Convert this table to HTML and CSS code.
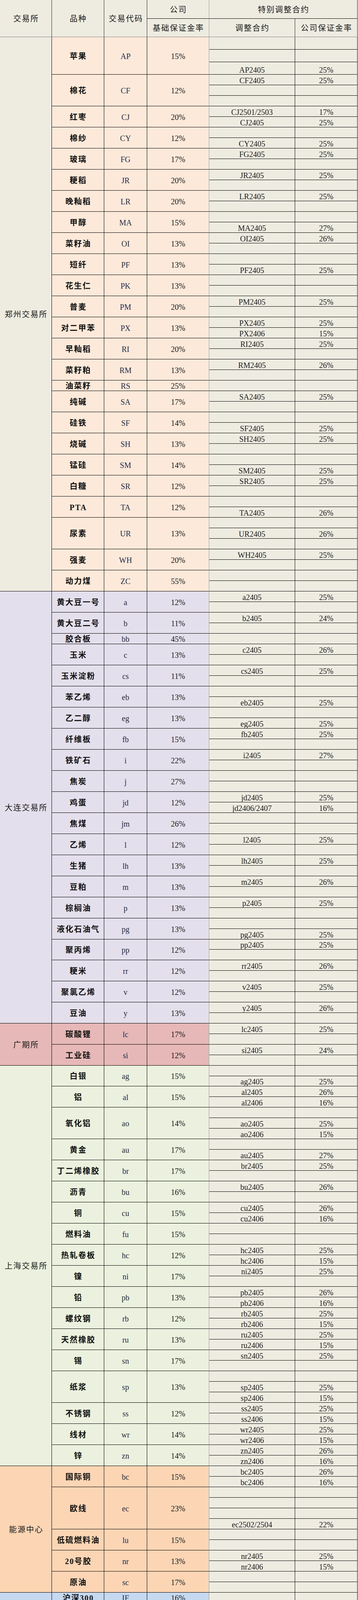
FILE: index.html
```html
<!DOCTYPE html>
<html lang="zh-CN">
<head>
<meta charset="utf-8">
<title>保证金率</title>
<link rel="stylesheet" href="styles.css">
</head>
<body>
<div class="sheet">
  <div class="head">
    <div class="h h-ex">交易所</div>
    <div class="h h-nm">品种</div>
    <div class="h h-cd">交易代码</div>
    <div class="h h-co">公司</div>
    <div class="h h-sp">特别调整合约</div>
    <div class="h h-base">基础保证金率</div>
    <div class="h h-adj">调整合约</div>
    <div class="h h-rate">公司保证金率</div>
  </div>

  <section class="ex zz">
    <div class="lab">郑州交易所</div>
    <div class="prods">
      <div class="p"><div class="n">苹果</div><div class="c">AP</div><div class="r">15%</div><div class="adj"><div class="s t"><span></span><span></span></div><div class="s t"><span></span><span></span></div><div class="s t"><span>AP2405</span><span>25%</span></div></div></div>
      <div class="p"><div class="n">棉花</div><div class="c">CF</div><div class="r">12%</div><div class="adj"><div class="s"><span>CF2405</span><span>25%</span></div><div class="s"><span></span><span></span></div><div class="s"><span></span><span></span></div></div></div>
      <div class="p"><div class="n">红枣</div><div class="c">CJ</div><div class="r">20%</div><div class="adj"><div class="s"><span>CJ2501/2503</span><span>17%</span></div><div class="s"><span>CJ2405</span><span>25%</span></div></div></div>
      <div class="p"><div class="n">棉纱</div><div class="c">CY</div><div class="r">12%</div><div class="adj"><div class="s"><span></span><span></span></div><div class="s"><span>CY2405</span><span>25%</span></div></div></div>
      <div class="p"><div class="n">玻璃</div><div class="c">FG</div><div class="r">17%</div><div class="adj"><div class="s"><span>FG2405</span><span>25%</span></div><div class="s"><span></span><span></span></div></div></div>
      <div class="p"><div class="n">粳稻</div><div class="c">JR</div><div class="r">20%</div><div class="adj"><div class="s"><span>JR2405</span><span>25%</span></div><div class="s"><span></span><span></span></div></div></div>
      <div class="p"><div class="n">晚籼稻</div><div class="c">LR</div><div class="r">20%</div><div class="adj"><div class="s"><span>LR2405</span><span>25%</span></div><div class="s"><span></span><span></span></div></div></div>
      <div class="p"><div class="n">甲醇</div><div class="c">MA</div><div class="r">15%</div><div class="adj"><div class="s"><span></span><span></span></div><div class="s"><span>MA2405</span><span>27%</span></div></div></div>
      <div class="p"><div class="n">菜籽油</div><div class="c">OI</div><div class="r">13%</div><div class="adj"><div class="s"><span>OI2405</span><span>26%</span></div><div class="s"><span></span><span></span></div></div></div>
      <div class="p"><div class="n">短纤</div><div class="c">PF</div><div class="r">13%</div><div class="adj"><div class="s"><span></span><span></span></div><div class="s"><span>PF2405</span><span>25%</span></div></div></div>
      <div class="p"><div class="n">花生仁</div><div class="c">PK</div><div class="r">13%</div><div class="adj"><div class="s"><span></span><span></span></div><div class="s"><span></span><span></span></div></div></div>
      <div class="p"><div class="n">普麦</div><div class="c">PM</div><div class="r">20%</div><div class="adj"><div class="s"><span>PM2405</span><span>25%</span></div><div class="s"><span></span><span></span></div></div></div>
      <div class="p"><div class="n">对二甲苯</div><div class="c">PX</div><div class="r">13%</div><div class="adj"><div class="s"><span>PX2405</span><span>25%</span></div><div class="s"><span>PX2406</span><span>15%</span></div></div></div>
      <div class="p"><div class="n">早籼稻</div><div class="c">RI</div><div class="r">20%</div><div class="adj"><div class="s"><span>RI2405</span><span>25%</span></div><div class="s"><span></span><span></span></div></div></div>
      <div class="p"><div class="n">菜籽粕</div><div class="c">RM</div><div class="r">13%</div><div class="adj"><div class="s"><span>RM2405</span><span>26%</span></div><div class="s"><span></span><span></span></div></div></div>
      <div class="p"><div class="n">油菜籽</div><div class="c">RS</div><div class="r">25%</div><div class="adj"><div class="s"><span></span><span></span></div></div></div>
      <div class="p"><div class="n">纯碱</div><div class="c">SA</div><div class="r">17%</div><div class="adj"><div class="s"><span>SA2405</span><span>25%</span></div><div class="s"><span></span><span></span></div></div></div>
      <div class="p"><div class="n">硅铁</div><div class="c">SF</div><div class="r">14%</div><div class="adj"><div class="s"><span></span><span></span></div><div class="s"><span>SF2405</span><span>25%</span></div></div></div>
      <div class="p"><div class="n">烧碱</div><div class="c">SH</div><div class="r">13%</div><div class="adj"><div class="s"><span>SH2405</span><span>25%</span></div><div class="s"><span></span><span></span></div></div></div>
      <div class="p"><div class="n">锰硅</div><div class="c">SM</div><div class="r">14%</div><div class="adj"><div class="s"><span></span><span></span></div><div class="s"><span>SM2405</span><span>25%</span></div></div></div>
      <div class="p"><div class="n">白糖</div><div class="c">SR</div><div class="r">12%</div><div class="adj"><div class="s"><span>SR2405</span><span>25%</span></div><div class="s"><span></span><span></span></div></div></div>
      <div class="p"><div class="n">PTA</div><div class="c">TA</div><div class="r">12%</div><div class="adj"><div class="s"><span></span><span></span></div><div class="s"><span>TA2405</span><span>26%</span></div></div></div>
      <div class="p"><div class="n">尿素</div><div class="c">UR</div><div class="r">13%</div><div class="adj"><div class="s"><span></span><span></span></div><div class="s"><span>UR2405</span><span>26%</span></div><div class="s"><span></span><span></span></div></div></div>
      <div class="p"><div class="n">强麦</div><div class="c">WH</div><div class="r">20%</div><div class="adj"><div class="s"><span>WH2405</span><span>25%</span></div><div class="s"><span></span><span></span></div></div></div>
      <div class="p"><div class="n">动力煤</div><div class="c">ZC</div><div class="r">55%</div><div class="adj"><div class="s"><span></span><span></span></div><div class="s"><span></span><span></span></div></div></div>
    </div>
  </section>

  <section class="ex dl">
    <div class="lab">大连交易所</div>
    <div class="prods">
      <div class="p"><div class="n">黄大豆一号</div><div class="c">a</div><div class="r">12%</div><div class="adj"><div class="s"><span>a2405</span><span>25%</span></div><div class="s"><span></span><span></span></div></div></div>
      <div class="p"><div class="n">黄大豆二号</div><div class="c">b</div><div class="r">11%</div><div class="adj"><div class="s"><span>b2405</span><span>24%</span></div><div class="s"><span></span><span></span></div></div></div>
      <div class="p"><div class="n">胶合板</div><div class="c">bb</div><div class="r">45%</div><div class="adj"><div class="s"><span></span><span></span></div></div></div>
      <div class="p"><div class="n">玉米</div><div class="c">c</div><div class="r">13%</div><div class="adj"><div class="s"><span>c2405</span><span>26%</span></div><div class="s"><span></span><span></span></div></div></div>
      <div class="p"><div class="n">玉米淀粉</div><div class="c">cs</div><div class="r">11%</div><div class="adj"><div class="s"><span>cs2405</span><span>25%</span></div><div class="s"><span></span><span></span></div></div></div>
      <div class="p"><div class="n">苯乙烯</div><div class="c">eb</div><div class="r">13%</div><div class="adj"><div class="s"><span></span><span></span></div><div class="s"><span>eb2405</span><span>25%</span></div></div></div>
      <div class="p"><div class="n">乙二醇</div><div class="c">eg</div><div class="r">13%</div><div class="adj"><div class="s"><span></span><span></span></div><div class="s"><span>eg2405</span><span>25%</span></div></div></div>
      <div class="p"><div class="n">纤维板</div><div class="c">fb</div><div class="r">15%</div><div class="adj"><div class="s"><span>fb2405</span><span>25%</span></div><div class="s"><span></span><span></span></div></div></div>
      <div class="p"><div class="n">铁矿石</div><div class="c">i</div><div class="r">22%</div><div class="adj"><div class="s"><span>i2405</span><span>27%</span></div><div class="s"><span></span><span></span></div></div></div>
      <div class="p"><div class="n">焦炭</div><div class="c">j</div><div class="r">27%</div><div class="adj"><div class="s"><span></span><span></span></div><div class="s"><span></span><span></span></div></div></div>
      <div class="p"><div class="n">鸡蛋</div><div class="c">jd</div><div class="r">12%</div><div class="adj"><div class="s"><span>jd2405</span><span>25%</span></div><div class="s"><span>jd2406/2407</span><span>16%</span></div></div></div>
      <div class="p"><div class="n">焦煤</div><div class="c">jm</div><div class="r">26%</div><div class="adj"><div class="s"><span></span><span></span></div><div class="s"><span></span><span></span></div></div></div>
      <div class="p"><div class="n">乙烯</div><div class="c">l</div><div class="r">12%</div><div class="adj"><div class="s"><span>l2405</span><span>25%</span></div><div class="s"><span></span><span></span></div></div></div>
      <div class="p"><div class="n">生猪</div><div class="c">lh</div><div class="r">13%</div><div class="adj"><div class="s"><span>lh2405</span><span>25%</span></div><div class="s"><span></span><span></span></div></div></div>
      <div class="p"><div class="n">豆粕</div><div class="c">m</div><div class="r">13%</div><div class="adj"><div class="s"><span>m2405</span><span>26%</span></div><div class="s"><span></span><span></span></div></div></div>
      <div class="p"><div class="n">棕榈油</div><div class="c">p</div><div class="r">13%</div><div class="adj"><div class="s"><span>p2405</span><span>25%</span></div><div class="s"><span></span><span></span></div></div></div>
      <div class="p"><div class="n">液化石油气</div><div class="c">pg</div><div class="r">13%</div><div class="adj"><div class="s"><span></span><span></span></div><div class="s"><span>pg2405</span><span>25%</span></div></div></div>
      <div class="p"><div class="n">聚丙烯</div><div class="c">pp</div><div class="r">12%</div><div class="adj"><div class="s x"><span>pp2405</span><span>25%</span></div><div class="s"><span></span><span></span></div></div></div>
      <div class="p"><div class="n">粳米</div><div class="c">rr</div><div class="r">12%</div><div class="adj"><div class="s"><span>rr2405</span><span>26%</span></div><div class="s"><span></span><span></span></div></div></div>
      <div class="p"><div class="n">聚氯乙烯</div><div class="c">v</div><div class="r">12%</div><div class="adj"><div class="s"><span>v2405</span><span>25%</span></div><div class="s"><span></span><span></span></div></div></div>
      <div class="p"><div class="n">豆油</div><div class="c">y</div><div class="r">13%</div><div class="adj"><div class="s"><span>y2405</span><span>26%</span></div><div class="s"><span></span><span></span></div></div></div>
    </div>
  </section>

  <section class="ex gz">
    <div class="lab">广期所</div>
    <div class="prods">
      <div class="p"><div class="n">碳酸锂</div><div class="c">lc</div><div class="r">17%</div><div class="adj"><div class="s"><span>lc2405</span><span>25%</span></div><div class="s"><span></span><span></span></div></div></div>
      <div class="p"><div class="n">工业硅</div><div class="c">si</div><div class="r">12%</div><div class="adj"><div class="s"><span>si2405</span><span>24%</span></div><div class="s"><span></span><span></span></div></div></div>
    </div>
  </section>

  <section class="ex shx">
    <div class="lab">上海交易所</div>
    <div class="prods">
      <div class="p"><div class="n">白银</div><div class="c">ag</div><div class="r">15%</div><div class="adj"><div class="s"><span></span><span></span></div><div class="s x"><span>ag2405</span><span>25%</span></div></div></div>
      <div class="p"><div class="n">铝</div><div class="c">al</div><div class="r">15%</div><div class="adj"><div class="s"><span>al2405</span><span>26%</span></div><div class="s"><span>al2406</span><span>16%</span></div></div></div>
      <div class="p"><div class="n">氧化铝</div><div class="c">ao</div><div class="r">14%</div><div class="adj"><div class="s"><span></span><span></span></div><div class="s"><span>ao2405</span><span>25%</span></div><div class="s"><span>ao2406</span><span>15%</span></div></div></div>
      <div class="p"><div class="n">黄金</div><div class="c">au</div><div class="r">17%</div><div class="adj"><div class="s"><span></span><span></span></div><div class="s"><span>au2405</span><span>27%</span></div></div></div>
      <div class="p"><div class="n">丁二烯橡胶</div><div class="c">br</div><div class="r">17%</div><div class="adj"><div class="s"><span>br2405</span><span>25%</span></div><div class="s"><span></span><span></span></div></div></div>
      <div class="p"><div class="n">沥青</div><div class="c">bu</div><div class="r">16%</div><div class="adj"><div class="s"><span>bu2405</span><span>26%</span></div><div class="s"><span></span><span></span></div></div></div>
      <div class="p"><div class="n">铜</div><div class="c">cu</div><div class="r">15%</div><div class="adj"><div class="s"><span>cu2405</span><span>26%</span></div><div class="s"><span>cu2406</span><span>16%</span></div></div></div>
      <div class="p"><div class="n">燃料油</div><div class="c">fu</div><div class="r">15%</div><div class="adj"><div class="s"><span></span><span></span></div><div class="s"><span></span><span></span></div></div></div>
      <div class="p"><div class="n">热轧卷板</div><div class="c">hc</div><div class="r">12%</div><div class="adj"><div class="s"><span>hc2405</span><span>25%</span></div><div class="s"><span>hc2406</span><span>15%</span></div></div></div>
      <div class="p"><div class="n">镍</div><div class="c">ni</div><div class="r">17%</div><div class="adj"><div class="s"><span>ni2405</span><span>25%</span></div><div class="s"><span></span><span></span></div></div></div>
      <div class="p"><div class="n">铅</div><div class="c">pb</div><div class="r">13%</div><div class="adj"><div class="s"><span>pb2405</span><span>26%</span></div><div class="s"><span>pb2406</span><span>16%</span></div></div></div>
      <div class="p"><div class="n">螺纹钢</div><div class="c">rb</div><div class="r">12%</div><div class="adj"><div class="s"><span>rb2405</span><span>25%</span></div><div class="s"><span>rb2406</span><span>15%</span></div></div></div>
      <div class="p"><div class="n">天然橡胶</div><div class="c">ru</div><div class="r">13%</div><div class="adj"><div class="s"><span>ru2405</span><span>25%</span></div><div class="s"><span>ru2406</span><span>15%</span></div></div></div>
      <div class="p"><div class="n">锡</div><div class="c">sn</div><div class="r">17%</div><div class="adj"><div class="s"><span>sn2405</span><span>25%</span></div><div class="s"><span></span><span></span></div></div></div>
      <div class="p"><div class="n">纸浆</div><div class="c">sp</div><div class="r">13%</div><div class="adj"><div class="s"><span></span><span></span></div><div class="s"><span>sp2405</span><span>25%</span></div><div class="s"><span>sp2406</span><span>15%</span></div></div></div>
      <div class="p"><div class="n">不锈钢</div><div class="c">ss</div><div class="r">12%</div><div class="adj"><div class="s"><span>ss2405</span><span>25%</span></div><div class="s"><span>ss2406</span><span>15%</span></div></div></div>
      <div class="p"><div class="n">线材</div><div class="c">wr</div><div class="r">14%</div><div class="adj"><div class="s"><span>wr2405</span><span>25%</span></div><div class="s"><span>wr2406</span><span>15%</span></div></div></div>
      <div class="p"><div class="n">锌</div><div class="c">zn</div><div class="r">14%</div><div class="adj"><div class="s"><span>zn2405</span><span>26%</span></div><div class="s"><span>zn2406</span><span>16%</span></div></div></div>
    </div>
  </section>

  <section class="ex ne">
    <div class="lab">能源中心</div>
    <div class="prods">
      <div class="p"><div class="n">国际铜</div><div class="c">bc</div><div class="r">15%</div><div class="adj"><div class="s"><span>bc2405</span><span>26%</span></div><div class="s"><span>bc2406</span><span>16%</span></div></div></div>
      <div class="p"><div class="n">欧线</div><div class="c">ec</div><div class="r">23%</div><div class="adj"><div class="s"><span></span><span></span></div><div class="s"><span></span><span></span></div><div class="s"><span></span><span></span></div><div class="s"><span>ec2502/2504</span><span>22%</span></div></div></div>
      <div class="p"><div class="n">低硫燃料油</div><div class="c">lu</div><div class="r">15%</div><div class="adj"><div class="s"><span></span><span></span></div><div class="s"><span></span><span></span></div></div></div>
      <div class="p"><div class="n">20号胶</div><div class="c">nr</div><div class="r">13%</div><div class="adj"><div class="s"><span>nr2405</span><span>25%</span></div><div class="s"><span>nr2406</span><span>15%</span></div></div></div>
      <div class="p"><div class="n">原油</div><div class="c">sc</div><div class="r">17%</div><div class="adj"><div class="s"><span></span><span></span></div><div class="s"><span></span><span></span></div></div></div>
    </div>
  </section>

  <section class="ex cf">
    <div class="lab">中金所</div>
    <div class="prods">
      <div class="p"><div class="n">沪深300</div><div class="c">IF</div><div class="r">16%</div><div class="adj"><div class="s"><span></span><span></span></div></div></div>
      <div class="p"><div class="n">中证1000</div><div class="c">IM</div><div class="r">16%</div><div class="adj"><div class="s"><span></span><span></span></div></div></div>
      <div class="p"><div class="n">中证500</div><div class="c">IC</div><div class="r">16%</div><div class="adj"><div class="s"><span></span><span></span></div></div></div>
      <div class="p"><div class="n">上证50</div><div class="c">IH</div><div class="r">16%</div><div class="adj"><div class="s"><span></span><span></span></div></div></div>
      <div class="p"><div class="n">2年期国债</div><div class="c">TS</div><div class="r">1%</div><div class="adj"><div class="s"><span>TS2403</span><span>1.5%</span></div></div></div>
      <div class="p"><div class="n">5年期国债</div><div class="c">TF</div><div class="r">3.2%</div><div class="adj"><div class="s"><span>TF2403</span><span>4%</span></div></div></div>
      <div class="p"><div class="n">10年期国债</div><div class="c">T</div><div class="r">4%</div><div class="adj"><div class="s"><span>T2403</span><span>5%</span></div></div></div>
      <div class="p"><div class="n">30年期国债</div><div class="c">TL</div><div class="r">5%</div><div class="adj"><div class="s"><span>TL2403</span><span>6.5%</span></div></div></div>
    </div>
  </section>

  <div class="blank">
    <div class="row"><div></div><div></div><div></div><div></div><div></div><div></div></div>
    <div class="row"><div></div><div></div><div></div><div></div><div></div><div></div></div>
    <div class="row"><div></div><div></div><div></div><div></div><div></div><div></div></div>
    <div class="row"><div></div><div></div><div></div><div></div><div></div><div></div></div>
    <div class="row"><div></div><div></div><div></div><div></div><div></div><div></div></div>
    <div class="row"><div></div><div></div><div></div><div></div><div></div><div></div></div>
  </div>
</div>
</body>
</html>
```

FILE: styles.css
```css
* { box-sizing: border-box; }

body {
  margin: 0;
  background: #ffffff;
  font-family: "Liberation Serif", "Noto Sans CJK SC", serif;
  font-size: 20px;
  line-height: 20px;
  color: #222222;
}

.sheet {
  width: 916px;
}

/* ---------- header ---------- */
.head {
  display: grid;
  grid-template-columns: 133px 134px 110px 159px 220px 160px;
  grid-template-rows: 48px 46px;
  background: #eeece1;
  border-bottom: 1px solid #7f7f7f;
}

.h {
  display: flex;
  align-items: center;
  justify-content: center;
  font-family: "Noto Sans CJK SC", sans-serif;
  line-height: 24px;
  letter-spacing: 2px;
  padding-left: 2px;
  color: #1a1a1a;
  border-right: 1px solid #222;
  overflow: hidden;
}

.h-ex { grid-column: 1; grid-row: 1 / 3; }
.h-nm { grid-column: 2; grid-row: 1 / 3; }
.h-cd { grid-column: 3; grid-row: 1 / 3; }
.h-co { grid-column: 4; grid-row: 1; border-bottom: 1px solid #000; border-right-color: #9a9a9a; }
.h-sp { grid-column: 5 / 7; grid-row: 1; border-bottom: 1px solid #000; }
.h-base { grid-column: 4; grid-row: 2; border-right-color: #9a9a9a; }
.h-adj { grid-column: 5; grid-row: 2; }
.h-rate { grid-column: 6; grid-row: 2; }

/* ---------- exchange blocks ---------- */
.ex {
  display: flex;
}

.lab {
  width: 133px;
  flex: none;
  display: flex;
  align-items: center;
  justify-content: center;
  font-family: "Noto Sans CJK SC", sans-serif;
  line-height: 24px;
  letter-spacing: 2px;
  padding-left: 2px;
  color: #1a1a1a;
  border-right: 1px solid #000;
  border-bottom: 1px solid #000;
}

.prods {
  display: flex;
  flex-direction: column;
  width: 783px;
}

.p {
  display: flex;
}

.n, .c, .r {
  display: flex;
  align-items: center;
  justify-content: center;
  padding-top: 2px;
  border-right: 1px solid #000;
  border-bottom: 1px solid #000;
  flex: none;
}

.n {
  width: 134px;
  font-weight: 700;
  letter-spacing: 2px;
  padding-left: 2px;
  color: #111;
  white-space: nowrap;
}

.c {
  width: 110px;
  color: #1f2d4a;
}

.r {
  width: 159px;
  color: #1a1a1a;
  border-right-color: #9a9a9a;
}

.adj {
  width: 380px;
  flex: none;
  background: #eeece1;
}

.s {
  display: flex;
  height: 27px;
  border-bottom: 1px solid #000;
}

.s.t { height: 32px; }
.s.x { height: 26px; }

.s span {
  display: flex;
  align-items: flex-end;
  justify-content: center;
  padding-bottom: 1px;
  border-right: 1px solid #000;
  color: #222;
  white-space: nowrap;
}

.s span:first-child { width: 220px; }
.s span:last-child { width: 160px; }

/* exchange colours */
.zz .lab { background: #eeece1; }
.zz .n, .zz .c, .zz .r { background: #fde9d9; }

.dl .lab, .dl .n, .dl .c, .dl .r { background: #e4dfec; }

.gz .lab, .gz .n, .gz .c, .gz .r { background: #e6b8b7; }

.shx .lab, .shx .n, .shx .c, .shx .r { background: #ebf1de; }

.ne .lab, .ne .n, .ne .c, .ne .r { background: #fcd5b4; }

.cf .lab, .cf .n, .cf .c, .cf .r { background: #c5d9f1; }

/* ---------- empty grid below ---------- */
.blank {
  height: 158px;
  overflow: hidden;
}

.blank .row {
  display: flex;
  height: 27px;
  border-bottom: 1px solid #d9d9d9;
}

.blank .row div {
  flex: none;
  border-right: 1px solid #d9d9d9;
}

.blank .row div:nth-child(1) { width: 133px; }
.blank .row div:nth-child(2) { width: 134px; }
.blank .row div:nth-child(3) { width: 110px; }
.blank .row div:nth-child(4) { width: 159px; border-right-color: #8a8a8a; }
.blank .row div:nth-child(5) { width: 220px; }
.blank .row div:nth-child(6) { width: 160px; }
```
